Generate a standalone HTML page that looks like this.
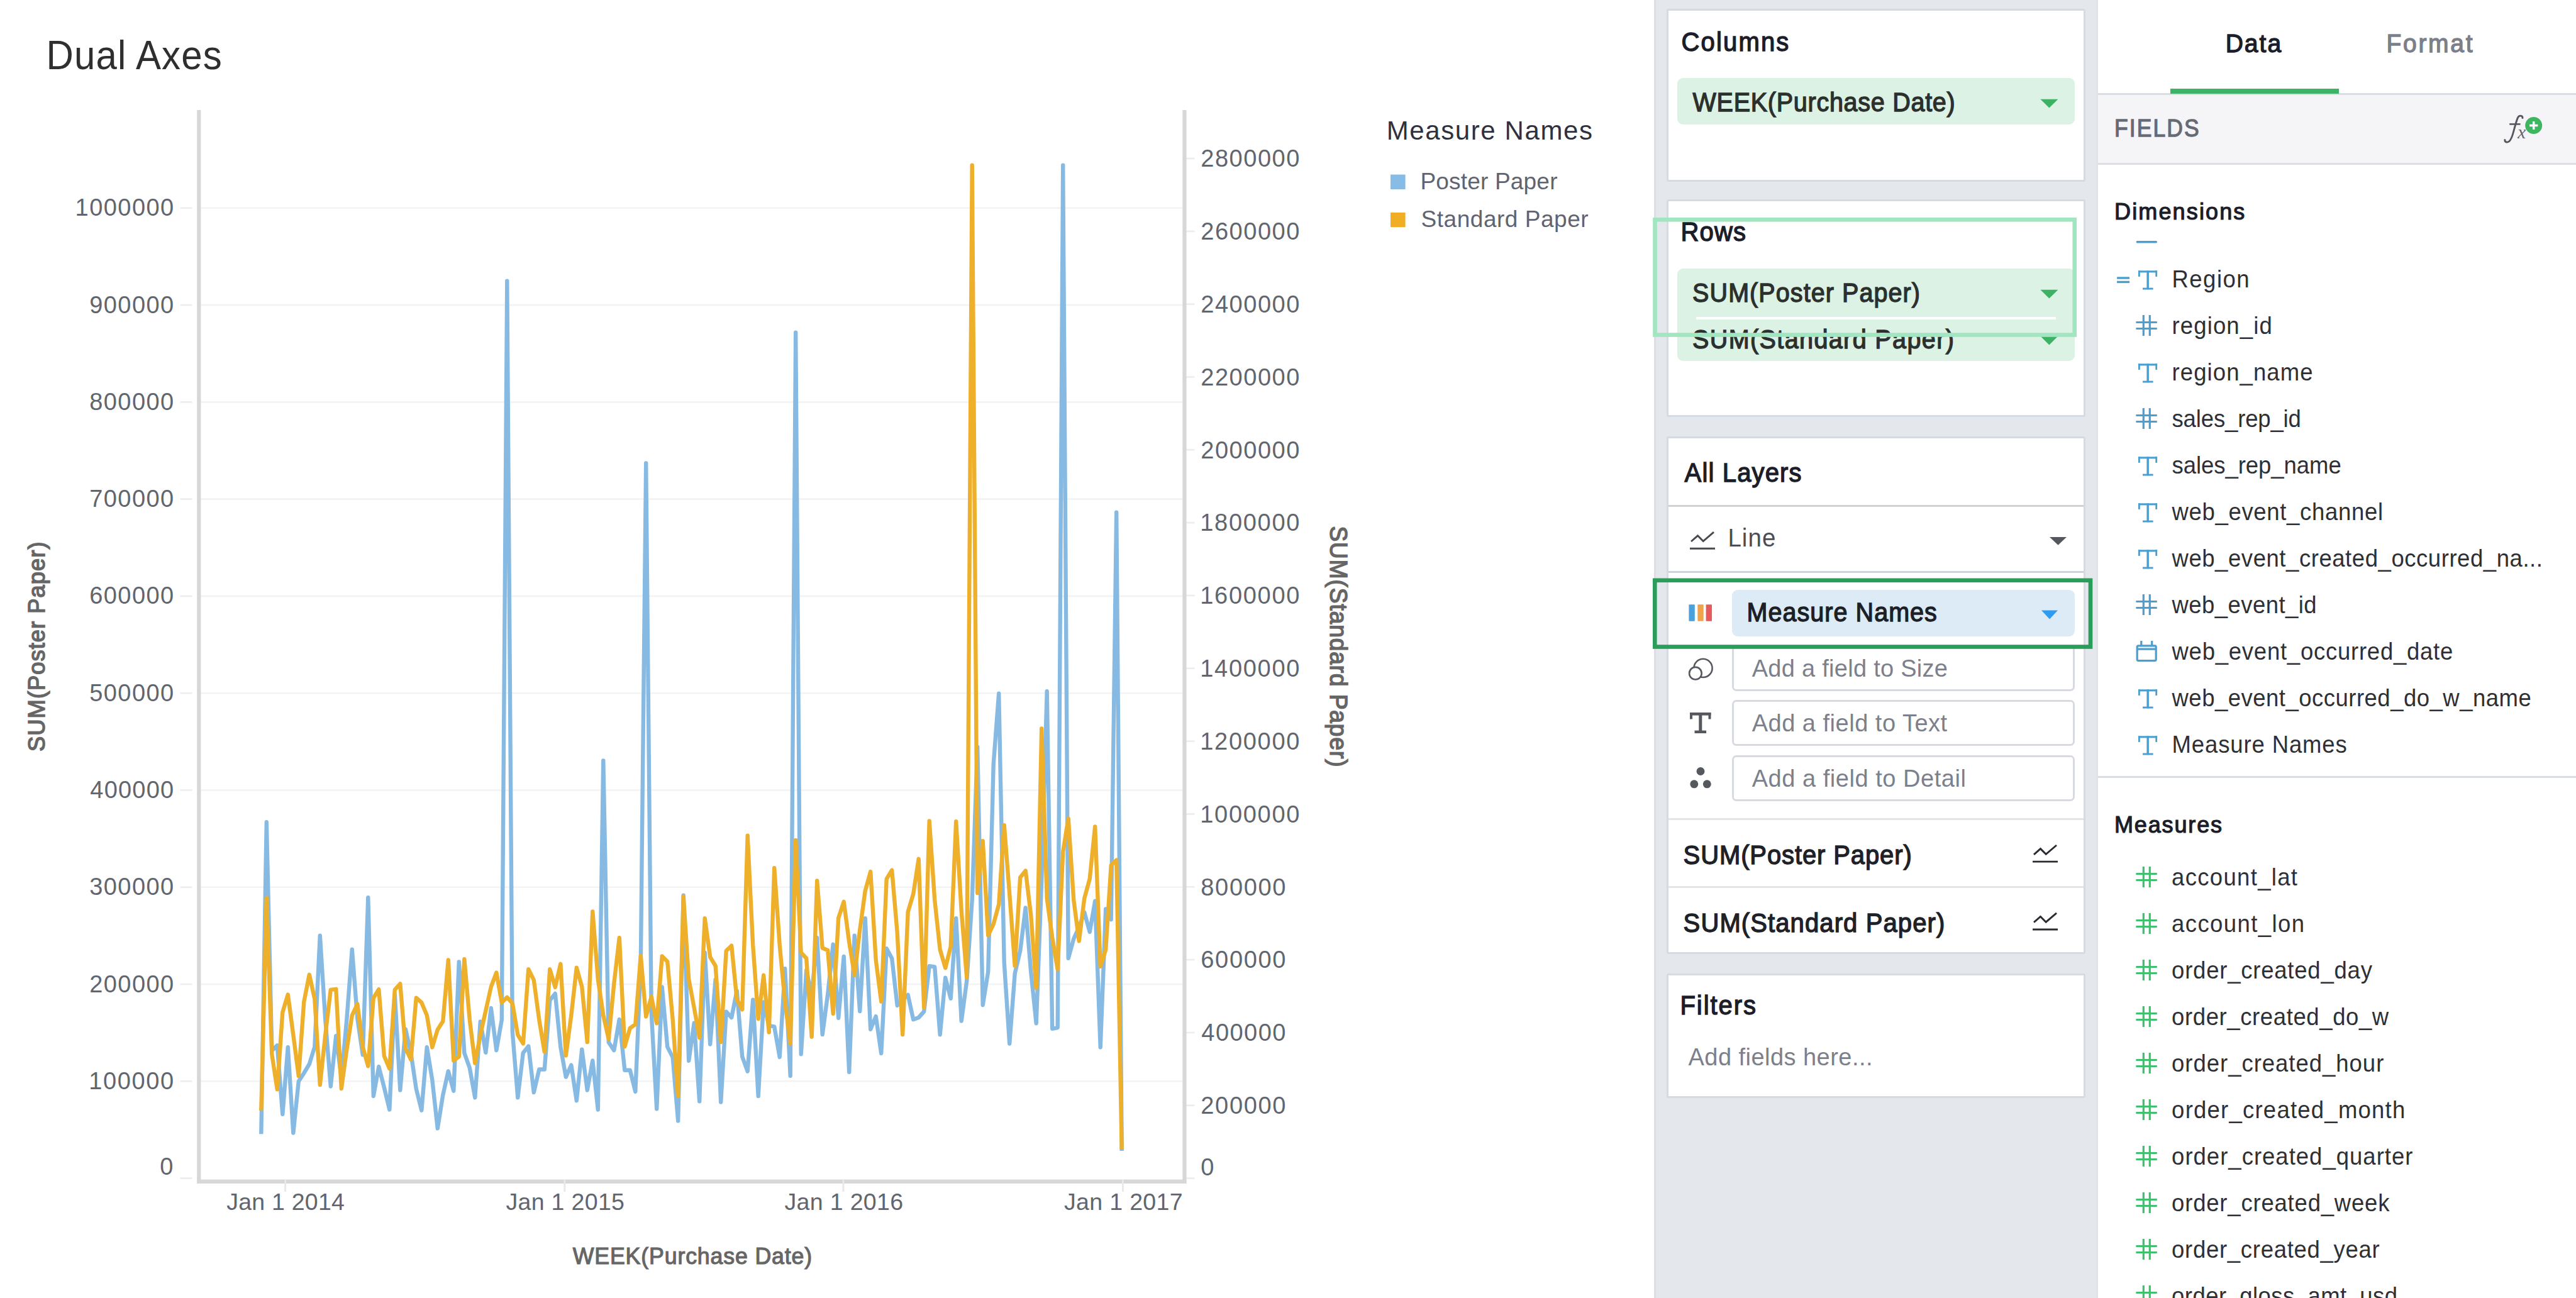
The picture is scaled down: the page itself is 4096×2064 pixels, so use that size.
<!DOCTYPE html><html><head><meta charset="utf-8"><title>Dual Axes</title>
<style>html,body{margin:0;padding:0;}body{width:4096px;height:2064px;position:relative;overflow:hidden;background:#fff;font-family:"Liberation Sans", sans-serif;}svg{position:absolute;left:0;top:0;}</style></head><body>
<svg width="4096" height="2064" viewBox="0 0 4096 2064">
<line x1="319" x2="1880" y1="1719.32" y2="1719.32" stroke="#f3f3f3" stroke-width="2.6"/>
<line x1="319" x2="1880" y1="1565.04" y2="1565.04" stroke="#f3f3f3" stroke-width="2.6"/>
<line x1="319" x2="1880" y1="1410.76" y2="1410.76" stroke="#f3f3f3" stroke-width="2.6"/>
<line x1="319" x2="1880" y1="1256.48" y2="1256.48" stroke="#f3f3f3" stroke-width="2.6"/>
<line x1="319" x2="1880" y1="1102.20" y2="1102.20" stroke="#f3f3f3" stroke-width="2.6"/>
<line x1="319" x2="1880" y1="947.92" y2="947.92" stroke="#f3f3f3" stroke-width="2.6"/>
<line x1="319" x2="1880" y1="793.64" y2="793.64" stroke="#f3f3f3" stroke-width="2.6"/>
<line x1="319" x2="1880" y1="639.36" y2="639.36" stroke="#f3f3f3" stroke-width="2.6"/>
<line x1="319" x2="1880" y1="485.08" y2="485.08" stroke="#f3f3f3" stroke-width="2.6"/>
<line x1="319" x2="1880" y1="330.80" y2="330.80" stroke="#f3f3f3" stroke-width="2.6"/>
<line x1="286.5" x2="305.5" y1="1873.60" y2="1873.60" stroke="#ededed" stroke-width="2.6"/>
<line x1="286.5" x2="305.5" y1="1719.32" y2="1719.32" stroke="#ededed" stroke-width="2.6"/>
<line x1="286.5" x2="305.5" y1="1565.04" y2="1565.04" stroke="#ededed" stroke-width="2.6"/>
<line x1="286.5" x2="305.5" y1="1410.76" y2="1410.76" stroke="#ededed" stroke-width="2.6"/>
<line x1="286.5" x2="305.5" y1="1256.48" y2="1256.48" stroke="#ededed" stroke-width="2.6"/>
<line x1="286.5" x2="305.5" y1="1102.20" y2="1102.20" stroke="#ededed" stroke-width="2.6"/>
<line x1="286.5" x2="305.5" y1="947.92" y2="947.92" stroke="#ededed" stroke-width="2.6"/>
<line x1="286.5" x2="305.5" y1="793.64" y2="793.64" stroke="#ededed" stroke-width="2.6"/>
<line x1="286.5" x2="305.5" y1="639.36" y2="639.36" stroke="#ededed" stroke-width="2.6"/>
<line x1="286.5" x2="305.5" y1="485.08" y2="485.08" stroke="#ededed" stroke-width="2.6"/>
<line x1="286.5" x2="305.5" y1="330.80" y2="330.80" stroke="#ededed" stroke-width="2.6"/>
<line x1="1886" x2="1899.5" y1="1873.60" y2="1873.60" stroke="#ededed" stroke-width="2.6"/>
<line x1="1886" x2="1899.5" y1="1757.77" y2="1757.77" stroke="#ededed" stroke-width="2.6"/>
<line x1="1886" x2="1899.5" y1="1641.94" y2="1641.94" stroke="#ededed" stroke-width="2.6"/>
<line x1="1886" x2="1899.5" y1="1526.11" y2="1526.11" stroke="#ededed" stroke-width="2.6"/>
<line x1="1886" x2="1899.5" y1="1410.28" y2="1410.28" stroke="#ededed" stroke-width="2.6"/>
<line x1="1886" x2="1899.5" y1="1294.45" y2="1294.45" stroke="#ededed" stroke-width="2.6"/>
<line x1="1886" x2="1899.5" y1="1178.62" y2="1178.62" stroke="#ededed" stroke-width="2.6"/>
<line x1="1886" x2="1899.5" y1="1062.79" y2="1062.79" stroke="#ededed" stroke-width="2.6"/>
<line x1="1886" x2="1899.5" y1="946.96" y2="946.96" stroke="#ededed" stroke-width="2.6"/>
<line x1="1886" x2="1899.5" y1="831.13" y2="831.13" stroke="#ededed" stroke-width="2.6"/>
<line x1="1886" x2="1899.5" y1="715.30" y2="715.30" stroke="#ededed" stroke-width="2.6"/>
<line x1="1886" x2="1899.5" y1="599.47" y2="599.47" stroke="#ededed" stroke-width="2.6"/>
<line x1="1886" x2="1899.5" y1="483.64" y2="483.64" stroke="#ededed" stroke-width="2.6"/>
<line x1="1886" x2="1899.5" y1="367.81" y2="367.81" stroke="#ededed" stroke-width="2.6"/>
<line x1="1886" x2="1899.5" y1="251.98" y2="251.98" stroke="#ededed" stroke-width="2.6"/>
<line x1="453.7" x2="453.7" y1="1882" y2="1895" stroke="#ededed" stroke-width="2.8"/>
<line x1="897.8" x2="897.8" y1="1882" y2="1895" stroke="#ededed" stroke-width="2.8"/>
<line x1="1340.9" x2="1340.9" y1="1882" y2="1895" stroke="#ededed" stroke-width="2.8"/>
<line x1="1785.4" x2="1785.4" y1="1882" y2="1895" stroke="#ededed" stroke-width="2.8"/>
<polyline points="415.3,1803.2 423.8,1307.3 432.3,1670.6 440.8,1662.3 449.3,1771.7 457.8,1665.1 466.3,1801.6 474.8,1719.6 483.3,1706.4 491.8,1692.1 500.3,1664.6 508.8,1487.6 517.3,1621.6 525.8,1727.5 534.3,1647.1 542.8,1714.4 551.3,1621.6 559.8,1509.8 568.3,1619.3 576.8,1677.4 585.3,1427.2 593.8,1743.0 602.3,1696.1 610.8,1729.1 619.3,1764.5 627.8,1581.5 636.3,1733.5 644.8,1636.4 653.3,1674.2 661.8,1731.5 670.3,1765.7 678.8,1665.1 687.3,1717.2 695.8,1794.4 704.3,1741.1 712.8,1703.3 721.3,1734.7 729.8,1529.4 738.3,1674.2 746.8,1698.1 755.3,1745.4 763.8,1624.4 772.3,1673.8 780.8,1603.0 789.3,1670.2 797.8,1621.6 806.3,446.7 814.8,1640.8 823.3,1745.4 831.8,1674.2 840.3,1663.6 848.8,1737.1 857.3,1700.5 865.8,1700.5 874.3,1590.6 882.8,1580.0 891.3,1664.6 899.8,1712.6 908.3,1693.6 916.8,1750.2 925.3,1668.6 933.8,1733.5 942.3,1686.5 950.8,1764.5 959.3,1209.4 967.8,1657.5 976.3,1670.2 984.8,1620.9 993.3,1701.7 1001.8,1701.7 1010.3,1735.9 1018.8,1533.0 1027.2,736.5 1035.7,1609.7 1044.2,1763.3 1052.7,1569.5 1061.2,1664.6 1069.7,1681.4 1078.2,1782.4 1086.7,1423.8 1095.2,1686.9 1103.7,1626.8 1112.2,1751.4 1120.7,1514.8 1129.2,1660.6 1137.7,1557.6 1146.2,1752.6 1154.7,1608.6 1163.2,1618.0 1171.7,1575.5 1180.2,1680.2 1188.7,1703.6 1197.2,1589.8 1205.7,1743.0 1214.2,1593.4 1222.7,1631.2 1231.2,1632.4 1239.7,1680.9 1248.2,1540.2 1256.7,1710.8 1265.2,528.8 1273.7,1676.2 1282.2,1542.8 1290.7,1583.0 1299.2,1491.2 1307.7,1645.1 1316.2,1581.0 1324.7,1501.8 1333.2,1618.8 1341.7,1521.0 1350.2,1704.8 1358.7,1487.6 1367.2,1608.1 1375.7,1460.1 1384.2,1636.8 1392.7,1616.1 1401.2,1675.0 1409.7,1508.3 1418.2,1524.0 1426.7,1598.9 1435.2,1590.0 1443.7,1582.0 1452.2,1621.2 1460.7,1618.0 1469.2,1608.5 1477.7,1536.2 1486.2,1537.4 1494.7,1645.2 1503.2,1554.8 1511.7,1587.8 1520.2,1460.1 1528.7,1623.6 1537.2,1560.0 1545.7,1431.0 1554.2,1187.8 1562.7,1598.2 1571.2,1545.0 1579.7,1215.0 1588.2,1102.8 1596.7,1530.0 1605.2,1659.5 1613.7,1548.0 1622.2,1512.0 1630.7,1443.4 1639.2,1545.0 1647.7,1627.2 1656.2,1400.0 1664.7,1099.3 1673.2,1635.8 1681.7,1634.0 1690.2,262.6 1698.7,1523.8 1707.2,1493.0 1715.7,1474.0 1724.2,1450.6 1732.7,1482.0 1741.2,1432.7 1749.7,1665.4 1758.2,1445.4 1766.7,1462.1 1775.2,814.8 1783.7,1830.0" fill="none" stroke="#86bae3" stroke-width="6.4" stroke-linejoin="round"/>
<polyline points="415.3,1766.1 423.8,1427.8 432.3,1676.6 440.8,1732.3 449.3,1609.7 457.8,1581.5 466.3,1645.5 474.8,1710.8 483.3,1593.0 491.8,1549.8 500.3,1588.2 508.8,1725.1 517.3,1645.5 525.8,1573.9 534.3,1572.8 542.8,1731.1 551.3,1669.4 559.8,1614.5 568.3,1596.5 576.8,1664.6 585.3,1695.3 593.8,1587.0 602.3,1573.2 610.8,1679.0 619.3,1699.2 627.8,1573.9 636.3,1564.3 644.8,1667.0 653.3,1685.0 661.8,1586.7 670.3,1594.2 678.8,1614.5 687.3,1665.4 695.8,1637.2 704.3,1624.0 712.8,1526.5 721.3,1686.5 729.8,1680.2 738.3,1525.1 746.8,1621.6 755.3,1690.5 763.8,1645.5 772.3,1607.3 780.8,1569.1 789.3,1546.6 797.8,1594.2 806.3,1585.8 814.8,1595.4 823.3,1645.5 831.8,1659.4 840.3,1541.2 848.8,1558.4 857.3,1621.6 865.8,1672.6 874.3,1541.3 882.8,1569.9 891.3,1532.8 899.8,1678.6 908.3,1614.5 916.8,1538.8 925.3,1569.1 933.8,1657.1 942.3,1449.4 950.8,1557.2 959.3,1614.5 967.8,1652.3 976.3,1564.3 984.8,1491.2 993.3,1664.2 1001.8,1634.8 1010.3,1628.8 1018.8,1519.8 1027.2,1616.5 1035.7,1585.0 1044.2,1627.2 1052.7,1520.5 1061.2,1529.0 1069.7,1621.6 1078.2,1743.0 1086.7,1425.5 1095.2,1557.2 1103.7,1602.5 1112.2,1649.9 1120.7,1460.1 1129.2,1521.8 1137.7,1536.0 1146.2,1657.1 1154.7,1512.0 1163.2,1503.7 1171.7,1589.4 1180.2,1605.3 1188.7,1328.8 1197.2,1503.0 1205.7,1620.0 1214.2,1550.8 1222.7,1641.5 1231.2,1380.1 1239.7,1502.7 1248.2,1593.0 1256.7,1659.5 1265.2,1335.9 1273.7,1514.7 1282.2,1524.0 1290.7,1648.7 1299.2,1400.4 1307.7,1507.5 1316.2,1511.0 1324.7,1611.7 1333.2,1459.7 1341.7,1433.8 1350.2,1498.0 1358.7,1550.8 1367.2,1478.8 1375.7,1416.7 1384.2,1386.1 1392.7,1526.6 1401.2,1592.6 1409.7,1397.6 1418.2,1383.7 1426.7,1483.0 1435.2,1645.2 1443.7,1450.0 1452.2,1421.5 1460.7,1365.8 1469.2,1602.2 1477.7,1305.4 1486.2,1431.0 1494.7,1510.0 1503.2,1539.2 1511.7,1505.0 1520.2,1306.1 1528.7,1448.0 1537.2,1554.2 1545.7,262.6 1554.2,1419.9 1562.7,1337.1 1571.2,1487.3 1579.7,1469.3 1588.2,1438.2 1596.7,1312.1 1605.2,1421.5 1613.7,1535.7 1622.2,1395.2 1630.7,1384.6 1639.2,1455.0 1647.7,1571.2 1656.2,1158.5 1664.7,1428.7 1673.2,1490.8 1681.7,1541.7 1690.2,1354.6 1698.7,1301.3 1707.2,1431.0 1715.7,1496.3 1724.2,1428.7 1732.7,1397.6 1741.2,1314.4 1749.7,1536.9 1758.2,1510.0 1766.7,1376.0 1775.2,1367.7 1783.7,1828.0" fill="none" stroke="#eeb02b" stroke-width="6.4" stroke-linejoin="round"/>
<rect x="313.2" y="175" width="6.2" height="1707" fill="#d7d7d7"/>
<rect x="1880.3" y="175" width="6.2" height="1707" fill="#d7d7d7"/>
<rect x="313.2" y="1875.6" width="1573.3" height="6.4" fill="#d7d7d7"/>
<line x1="453.7" x2="453.7" y1="1875.6" y2="1895" stroke="#e9e9e9" stroke-width="2.8"/>
<line x1="897.8" x2="897.8" y1="1875.6" y2="1895" stroke="#e9e9e9" stroke-width="2.8"/>
<line x1="1340.9" x2="1340.9" y1="1875.6" y2="1895" stroke="#e9e9e9" stroke-width="2.8"/>
<line x1="1785.4" x2="1785.4" y1="1875.6" y2="1895" stroke="#e9e9e9" stroke-width="2.8"/>
<rect x="2211" y="277.6" width="23.6" height="23.4" fill="#86bce5"/>
<rect x="2211" y="338" width="23.6" height="23.2" fill="#efae24"/>
<text transform="translate(71,1028.2) rotate(-90) scale(1,1.03)" text-anchor="middle" font-family='"Liberation Sans", sans-serif' font-size="36.3" fill="#666" stroke="#666" stroke-width="1.5" textLength="333.5" lengthAdjust="spacing">SUM(Poster Paper)</text>
<text transform="translate(2115,1028) rotate(90) scale(1,1.03)" text-anchor="middle" font-family='"Liberation Sans", sans-serif' font-size="37" fill="#666" stroke="#666" stroke-width="1.5" textLength="383" lengthAdjust="spacing">SUM(Standard Paper)</text>
</svg>
<div style="position:absolute;left:73.60px;top:60.01px;font-size:60px;line-height:60px;color:#2f2f2f;white-space:nowrap;letter-spacing:1.125px;transform:scaleY(1.068);transform-origin:0 50.79px;">Dual Axes</div>
<div style="position:absolute;left:254.30px;top:1836.13px;font-size:38px;line-height:38px;color:#61656e;white-space:nowrap;">0</div>
<div style="position:absolute;left:141.30px;top:1699.85px;font-size:38px;line-height:38px;color:#61656e;white-space:nowrap;letter-spacing:1.600px;">100000</div>
<div style="position:absolute;left:142.30px;top:1545.57px;font-size:38px;line-height:38px;color:#61656e;white-space:nowrap;letter-spacing:1.400px;">200000</div>
<div style="position:absolute;left:142.30px;top:1391.29px;font-size:38px;line-height:38px;color:#61656e;white-space:nowrap;letter-spacing:1.400px;">300000</div>
<div style="position:absolute;left:143.30px;top:1237.01px;font-size:38px;line-height:38px;color:#61656e;white-space:nowrap;letter-spacing:1.200px;">400000</div>
<div style="position:absolute;left:142.30px;top:1082.73px;font-size:38px;line-height:38px;color:#61656e;white-space:nowrap;letter-spacing:1.400px;">500000</div>
<div style="position:absolute;left:142.30px;top:928.45px;font-size:38px;line-height:38px;color:#61656e;white-space:nowrap;letter-spacing:1.400px;">600000</div>
<div style="position:absolute;left:142.30px;top:774.17px;font-size:38px;line-height:38px;color:#61656e;white-space:nowrap;letter-spacing:1.400px;">700000</div>
<div style="position:absolute;left:142.30px;top:619.89px;font-size:38px;line-height:38px;color:#61656e;white-space:nowrap;letter-spacing:1.400px;">800000</div>
<div style="position:absolute;left:142.30px;top:465.61px;font-size:38px;line-height:38px;color:#61656e;white-space:nowrap;letter-spacing:1.400px;">900000</div>
<div style="position:absolute;left:119.60px;top:311.33px;font-size:38px;line-height:38px;color:#61656e;white-space:nowrap;letter-spacing:1.450px;">1000000</div>
<div style="position:absolute;left:1909.30px;top:1836.83px;font-size:38px;line-height:38px;color:#61656e;white-space:nowrap;">0</div>
<div style="position:absolute;left:1909.30px;top:1739.10px;font-size:38px;line-height:38px;color:#61656e;white-space:nowrap;letter-spacing:1.660px;">200000</div>
<div style="position:absolute;left:1910.30px;top:1623.27px;font-size:38px;line-height:38px;color:#61656e;white-space:nowrap;letter-spacing:1.460px;">400000</div>
<div style="position:absolute;left:1909.30px;top:1507.44px;font-size:38px;line-height:38px;color:#61656e;white-space:nowrap;letter-spacing:1.660px;">600000</div>
<div style="position:absolute;left:1909.30px;top:1391.61px;font-size:38px;line-height:38px;color:#61656e;white-space:nowrap;letter-spacing:1.660px;">800000</div>
<div style="position:absolute;left:1908.30px;top:1275.78px;font-size:38px;line-height:38px;color:#61656e;white-space:nowrap;letter-spacing:1.683px;">1000000</div>
<div style="position:absolute;left:1908.30px;top:1159.95px;font-size:38px;line-height:38px;color:#61656e;white-space:nowrap;letter-spacing:1.683px;">1200000</div>
<div style="position:absolute;left:1908.30px;top:1044.12px;font-size:38px;line-height:38px;color:#61656e;white-space:nowrap;letter-spacing:1.683px;">1400000</div>
<div style="position:absolute;left:1908.30px;top:928.29px;font-size:38px;line-height:38px;color:#61656e;white-space:nowrap;letter-spacing:1.683px;">1600000</div>
<div style="position:absolute;left:1908.30px;top:812.46px;font-size:38px;line-height:38px;color:#61656e;white-space:nowrap;letter-spacing:1.683px;">1800000</div>
<div style="position:absolute;left:1909.30px;top:696.63px;font-size:38px;line-height:38px;color:#61656e;white-space:nowrap;letter-spacing:1.517px;">2000000</div>
<div style="position:absolute;left:1909.30px;top:580.80px;font-size:38px;line-height:38px;color:#61656e;white-space:nowrap;letter-spacing:1.517px;">2200000</div>
<div style="position:absolute;left:1909.30px;top:464.97px;font-size:38px;line-height:38px;color:#61656e;white-space:nowrap;letter-spacing:1.517px;">2400000</div>
<div style="position:absolute;left:1909.30px;top:349.14px;font-size:38px;line-height:38px;color:#61656e;white-space:nowrap;letter-spacing:1.517px;">2600000</div>
<div style="position:absolute;left:1909.30px;top:233.31px;font-size:38px;line-height:38px;color:#61656e;white-space:nowrap;letter-spacing:1.517px;">2800000</div>
<div style="position:absolute;left:360.30px;top:1892.56px;font-size:37.5px;line-height:37.5px;color:#61656e;white-space:nowrap;letter-spacing:0.222px;">Jan 1 2014</div>
<div style="position:absolute;left:804.40px;top:1892.56px;font-size:37.5px;line-height:37.5px;color:#61656e;white-space:nowrap;letter-spacing:0.333px;">Jan 1 2015</div>
<div style="position:absolute;left:1247.50px;top:1892.56px;font-size:37.5px;line-height:37.5px;color:#61656e;white-space:nowrap;letter-spacing:0.333px;">Jan 1 2016</div>
<div style="position:absolute;left:1692.00px;top:1892.56px;font-size:37.5px;line-height:37.5px;color:#61656e;white-space:nowrap;letter-spacing:0.333px;">Jan 1 2017</div>
<div style="position:absolute;left:910.75px;top:1981.18px;font-size:35.7px;line-height:35.7px;color:#666;white-space:nowrap;-webkit-text-stroke:1.18px #666;letter-spacing:0.861px;transform:scaleY(1.05);transform-origin:0 30.22px;">WEEK(Purchase Date)</div>
<div style="position:absolute;left:2204.80px;top:186.75px;font-size:42px;line-height:42px;color:#2f3140;white-space:nowrap;letter-spacing:1.583px;transform:scaleY(1.02);transform-origin:0 35.55px;">Measure Names</div>
<div style="position:absolute;left:2258.50px;top:270.18px;font-size:37px;line-height:37px;color:#5f6470;white-space:nowrap;letter-spacing:0.182px;">Poster Paper</div>
<div style="position:absolute;left:2259.50px;top:330.48px;font-size:37px;line-height:37px;color:#5f6470;white-space:nowrap;letter-spacing:0.538px;">Standard Paper</div>
<div style="position:absolute;left:2630.00px;top:0.00px;width:705.50px;height:2064.00px;box-sizing:border-box;background:#e4e7ec;"></div>
<div style="position:absolute;left:2630.00px;top:0.00px;width:2.60px;height:2064.00px;box-sizing:border-box;background:#dcdee3;"></div>
<div style="position:absolute;left:3332.50px;top:0.00px;width:3.00px;height:2064.00px;box-sizing:border-box;background:#dfe2e7;"></div>
<div style="position:absolute;left:2650.00px;top:14.00px;width:666.00px;height:274.50px;box-sizing:border-box;background:#fff;border:3px solid #d6dae1;border-radius:3px;"></div>
<div style="position:absolute;left:2673.50px;top:46.84px;font-size:40px;line-height:40px;color:#1b1d29;white-space:nowrap;-webkit-text-stroke:1.32px #1b1d29;letter-spacing:2.167px;transform:scaleY(1.065);transform-origin:0 33.86px;">Columns</div>
<div style="position:absolute;left:2667.00px;top:124.00px;width:632.40px;height:74.00px;box-sizing:border-box;background:#dbf2e4;border-radius:9px;"></div>
<div style="position:absolute;left:2691.60px;top:143.96px;font-size:39.5px;line-height:39.5px;color:#2c302d;white-space:nowrap;-webkit-text-stroke:1.30px #2c302d;letter-spacing:0.733px;transform:scaleY(1.065);transform-origin:0 33.44px;">WEEK(Purchase Date)</div>
<div style="position:absolute;left:2650.00px;top:316.80px;width:666.00px;height:346.20px;box-sizing:border-box;background:#fff;border:3px solid #d6dae1;border-radius:3px;"></div>
<div style="position:absolute;left:2672.60px;top:348.94px;font-size:40px;line-height:40px;color:#1b1d29;white-space:nowrap;-webkit-text-stroke:1.32px #1b1d29;letter-spacing:1.133px;transform:scaleY(1.065);transform-origin:0 33.86px;">Rows</div>
<div style="position:absolute;left:2667.00px;top:427.30px;width:632.40px;height:146.70px;box-sizing:border-box;background:#dbf2e4;border-radius:9px;"></div>
<div style="position:absolute;left:2696.50px;top:504.30px;width:572.50px;height:3.30px;box-sizing:border-box;background:#fff;"></div>
<div style="position:absolute;left:2691.10px;top:446.86px;font-size:39.5px;line-height:39.5px;color:#2c302d;white-space:nowrap;-webkit-text-stroke:1.30px #2c302d;letter-spacing:1.081px;transform:scaleY(1.065);transform-origin:0 33.44px;">SUM(Poster Paper)</div>
<div style="position:absolute;left:2691.10px;top:520.76px;font-size:39.5px;line-height:39.5px;color:#2c302d;white-space:nowrap;-webkit-text-stroke:1.30px #2c302d;letter-spacing:1.389px;transform:scaleY(1.065);transform-origin:0 33.44px;">SUM(Standard Paper)</div>
<div style="position:absolute;left:2650.00px;top:693.50px;width:666.00px;height:823.10px;box-sizing:border-box;background:#fff;border:3px solid #d6dae1;border-radius:3px;"></div>
<div style="position:absolute;left:2678.60px;top:732.34px;font-size:40px;line-height:40px;color:#1b1d29;white-space:nowrap;-webkit-text-stroke:1.32px #1b1d29;letter-spacing:1.144px;transform:scaleY(1.065);transform-origin:0 33.86px;">All Layers</div>
<div style="position:absolute;left:2653.00px;top:802.80px;width:660.00px;height:3.40px;box-sizing:border-box;background:#cfd2d7;"></div>
<div style="position:absolute;left:2747.40px;top:837.41px;font-size:38.5px;line-height:38.5px;color:#4b4d54;white-space:nowrap;letter-spacing:1.067px;transform:scaleY(1.04);transform-origin:0 32.59px;">Line</div>
<div style="position:absolute;left:2653.00px;top:907.80px;width:660.00px;height:3.40px;box-sizing:border-box;background:#cfd2d7;"></div>
<div style="position:absolute;left:2754.30px;top:938.00px;width:545.10px;height:73.50px;box-sizing:border-box;background:#dcebf6;border-radius:9px;"></div>
<div style="position:absolute;left:2777.60px;top:954.96px;font-size:39.5px;line-height:39.5px;color:#1d1f27;white-space:nowrap;-webkit-text-stroke:1.30px #1d1f27;letter-spacing:1.042px;transform:scaleY(1.065);transform-origin:0 33.44px;">Measure Names</div>
<div style="position:absolute;left:2754.30px;top:1025.50px;width:545.10px;height:73.00px;box-sizing:border-box;background:#fff;border:3px solid #d7dae0;border-radius:7px;"></div>
<div style="position:absolute;left:2785.70px;top:1043.73px;font-size:38px;line-height:38px;color:#7c808c;white-space:nowrap;letter-spacing:0.278px;transform:scaleY(1.03);transform-origin:0 32.17px;">Add a field to Size</div>
<div style="position:absolute;left:2754.30px;top:1113.10px;width:545.10px;height:73.00px;box-sizing:border-box;background:#fff;border:3px solid #d7dae0;border-radius:7px;"></div>
<div style="position:absolute;left:2785.70px;top:1131.33px;font-size:38px;line-height:38px;color:#7c808c;white-space:nowrap;letter-spacing:0.500px;transform:scaleY(1.03);transform-origin:0 32.17px;">Add a field to Text</div>
<div style="position:absolute;left:2754.30px;top:1200.70px;width:545.10px;height:73.00px;box-sizing:border-box;background:#fff;border:3px solid #d7dae0;border-radius:7px;"></div>
<div style="position:absolute;left:2785.70px;top:1218.93px;font-size:38px;line-height:38px;color:#7c808c;white-space:nowrap;letter-spacing:0.530px;transform:scaleY(1.03);transform-origin:0 32.17px;">Add a field to Detail</div>
<div style="position:absolute;left:2653.00px;top:1300.50px;width:660.00px;height:3.00px;box-sizing:border-box;background:#e3e5ea;"></div>
<div style="position:absolute;left:2676.60px;top:1340.14px;font-size:40px;line-height:40px;color:#202127;white-space:nowrap;-webkit-text-stroke:1.32px #202127;letter-spacing:0.887px;transform:scaleY(1.065);transform-origin:0 33.86px;">SUM(Poster Paper)</div>
<div style="position:absolute;left:2653.00px;top:1408.50px;width:660.00px;height:3.00px;box-sizing:border-box;background:#e3e5ea;"></div>
<div style="position:absolute;left:2676.60px;top:1448.04px;font-size:40px;line-height:40px;color:#202127;white-space:nowrap;-webkit-text-stroke:1.32px #202127;letter-spacing:1.111px;transform:scaleY(1.065);transform-origin:0 33.86px;">SUM(Standard Paper)</div>
<div style="position:absolute;left:2650.00px;top:1547.70px;width:666.00px;height:198.80px;box-sizing:border-box;background:#fff;border:3px solid #d6dae1;border-radius:3px;"></div>
<div style="position:absolute;left:2671.50px;top:1579.14px;font-size:40px;line-height:40px;color:#1b1d29;white-space:nowrap;-webkit-text-stroke:1.32px #1b1d29;letter-spacing:1.917px;transform:scaleY(1.065);transform-origin:0 33.86px;">Filters</div>
<div style="position:absolute;left:2684.50px;top:1662.13px;font-size:38px;line-height:38px;color:#7c808c;white-space:nowrap;letter-spacing:0.459px;transform:scaleY(1.03);transform-origin:0 32.17px;">Add fields here...</div>
<svg width="4096" height="2064" viewBox="0 0 4096 2064">
<path d="M3244.4,157.8 h28 l-14,13.8z" fill="#3db164"/>
<path d="M3244.4,460.8 h28 l-14,13.8z" fill="#3db164"/>
<path d="M3244.4,534.6 h28 l-14,13.8z" fill="#3db164"/>
<path d="M3259,854 h27 l-13.5,12.8z" fill="#55575f"/>
<path d="M3246,970.6 h26 l-13,14z" fill="#2e9cf0"/>
<rect x="2685.4" y="961.2" width="9.4" height="26.6" rx="1" fill="#4aa2dc"/>
<rect x="2699.3" y="961.2" width="9.4" height="26.6" rx="1" fill="#f0a34a"/>
<rect x="2712.6" y="961.2" width="9.4" height="26.6" rx="1" fill="#e8595b"/>
<g fill="none" stroke="#47494f" stroke-width="2.9"><path d="M2687,872.3 h40"/><path d="M2689,861 l10.5,-9.2 l8.7,8.7 l16.8,-14.3"/></g>
<g fill="none" stroke="#2a2b30" stroke-width="2.9"><path d="M3232,1370.1 h40"/><path d="M3234,1358.8 l10.5,-9.2 l8.7,8.7 l16.8,-14.3"/></g>
<g fill="none" stroke="#2a2b30" stroke-width="2.9"><path d="M3232,1478.0 h40"/><path d="M3234,1466.7 l10.5,-9.2 l8.7,8.7 l16.8,-14.3"/></g>
<circle cx="2708" cy="1062.4" r="14.6" fill="none" stroke="#55585f" stroke-width="2.6"/>
<circle cx="2695.9" cy="1070.7" r="9.8" fill="#fff" stroke="#55585f" stroke-width="2.6"/>
<g fill="#55585f"><rect x="2687" y="1133" width="33.5" height="4.6"/><rect x="2687" y="1133" width="4" height="10.5"/><rect x="2716.5" y="1133" width="4" height="10.5"/><rect x="2701.3" y="1133" width="5" height="33"/><rect x="2694.5" y="1161.6" width="18.6" height="4.4"/></g>
<g fill="#55585f"><circle cx="2704" cy="1226.5" r="6.5"/><circle cx="2693.8" cy="1246.8" r="6.5"/><circle cx="2714.3" cy="1246.8" r="6.5"/></g>
<rect x="2631.5" y="349.3" width="667.2" height="183.2" fill="none" stroke="#a2e5c1" stroke-width="6.6"/>
<rect x="2631.3" y="922.8" width="692.7" height="105.7" fill="none" stroke="#2a9d5b" stroke-width="6.6"/>
</svg>
<div style="position:absolute;left:3538.70px;top:50.39px;font-size:39px;line-height:39px;color:#1b1d29;white-space:nowrap;-webkit-text-stroke:1.29px #1b1d29;letter-spacing:2.000px;transform:scaleY(1.05);transform-origin:0 33.01px;">Data</div>
<div style="position:absolute;left:3794.50px;top:50.39px;font-size:39px;line-height:39px;color:#7b7f8b;white-space:nowrap;-webkit-text-stroke:1.29px #7b7f8b;letter-spacing:2.700px;transform:scaleY(1.05);transform-origin:0 33.01px;">Format</div>
<div style="position:absolute;left:3335.50px;top:148.30px;width:760.50px;height:3.10px;box-sizing:border-box;background:#d9dce1;"></div>
<div style="position:absolute;left:3450.50px;top:140.60px;width:268.80px;height:8.00px;box-sizing:border-box;background:#3eb266;"></div>
<div style="position:absolute;left:3335.50px;top:151.40px;width:760.50px;height:107.60px;box-sizing:border-box;background:#f5f5f8;"></div>
<div style="position:absolute;left:3335.50px;top:259.00px;width:760.50px;height:3.00px;box-sizing:border-box;background:#dcdfe4;"></div>
<div style="position:absolute;left:3362.00px;top:187.85px;font-size:35.5px;line-height:35.5px;color:#666a75;white-space:nowrap;-webkit-text-stroke:1.17px #666a75;letter-spacing:2.060px;transform:scaleY(1.07);transform-origin:0 30.05px;">FIELDS</div>
<div style="position:absolute;left:3362.00px;top:318.73px;font-size:36px;line-height:36px;color:#1b1d29;white-space:nowrap;-webkit-text-stroke:1.19px #1b1d29;letter-spacing:2.144px;transform:scaleY(1.05);transform-origin:0 30.47px;">Dimensions</div>
<div style="position:absolute;left:3335.50px;top:1233.50px;width:760.50px;height:3.00px;box-sizing:border-box;background:#d9dce3;"></div>
<div style="position:absolute;left:3362.00px;top:1293.53px;font-size:36px;line-height:36px;color:#1b1d29;white-space:nowrap;-webkit-text-stroke:1.19px #1b1d29;letter-spacing:1.857px;transform:scaleY(1.05);transform-origin:0 30.47px;">Measures</div>
<div style="position:absolute;left:3453.50px;top:427.30px;font-size:36.5px;line-height:36.5px;color:#2e3035;white-space:nowrap;letter-spacing:1.480px;transform:scaleY(1.04);transform-origin:0 30.90px;">Region</div>
<div style="position:absolute;left:3453.50px;top:501.30px;font-size:36.5px;line-height:36.5px;color:#2e3035;white-space:nowrap;letter-spacing:1.137px;transform:scaleY(1.04);transform-origin:0 30.90px;">region_id</div>
<div style="position:absolute;left:3453.50px;top:575.30px;font-size:36.5px;line-height:36.5px;color:#2e3035;white-space:nowrap;letter-spacing:1.100px;transform:scaleY(1.04);transform-origin:0 30.90px;">region_name</div>
<div style="position:absolute;left:3453.50px;top:649.30px;font-size:36.5px;line-height:36.5px;color:#2e3035;white-space:nowrap;letter-spacing:-0.145px;transform:scaleY(1.04);transform-origin:0 30.90px;">sales_rep_id</div>
<div style="position:absolute;left:3453.50px;top:723.30px;font-size:36.5px;line-height:36.5px;color:#2e3035;white-space:nowrap;letter-spacing:-0.046px;transform:scaleY(1.04);transform-origin:0 30.90px;">sales_rep_name</div>
<div style="position:absolute;left:3453.50px;top:797.30px;font-size:36.5px;line-height:36.5px;color:#2e3035;white-space:nowrap;letter-spacing:0.675px;transform:scaleY(1.04);transform-origin:0 30.90px;">web_event_channel</div>
<div style="position:absolute;left:3453.50px;top:871.30px;font-size:36.5px;line-height:36.5px;color:#2e3035;white-space:nowrap;letter-spacing:0.555px;transform:scaleY(1.04);transform-origin:0 30.90px;">web_event_created_occurred_na...</div>
<div style="position:absolute;left:3453.50px;top:945.30px;font-size:36.5px;line-height:36.5px;color:#2e3035;white-space:nowrap;letter-spacing:0.436px;transform:scaleY(1.04);transform-origin:0 30.90px;">web_event_id</div>
<div style="position:absolute;left:3453.50px;top:1019.30px;font-size:36.5px;line-height:36.5px;color:#2e3035;white-space:nowrap;letter-spacing:0.755px;transform:scaleY(1.04);transform-origin:0 30.90px;">web_event_occurred_date</div>
<div style="position:absolute;left:3453.50px;top:1093.30px;font-size:36.5px;line-height:36.5px;color:#2e3035;white-space:nowrap;letter-spacing:0.489px;transform:scaleY(1.04);transform-origin:0 30.90px;">web_event_occurred_do_w_name</div>
<div style="position:absolute;left:3453.50px;top:1167.30px;font-size:36.5px;line-height:36.5px;color:#2e3035;white-space:nowrap;letter-spacing:0.875px;transform:scaleY(1.04);transform-origin:0 30.90px;">Measure Names</div>
<div style="position:absolute;left:3453.10px;top:1378.30px;font-size:36.5px;line-height:36.5px;color:#2e3035;white-space:nowrap;letter-spacing:1.320px;transform:scaleY(1.04);transform-origin:0 30.90px;">account_lat</div>
<div style="position:absolute;left:3453.10px;top:1452.30px;font-size:36.5px;line-height:36.5px;color:#2e3035;white-space:nowrap;letter-spacing:1.400px;transform:scaleY(1.04);transform-origin:0 30.90px;">account_lon</div>
<div style="position:absolute;left:3453.10px;top:1526.30px;font-size:36.5px;line-height:36.5px;color:#2e3035;white-space:nowrap;letter-spacing:0.775px;transform:scaleY(1.04);transform-origin:0 30.90px;">order_created_day</div>
<div style="position:absolute;left:3453.10px;top:1600.30px;font-size:36.5px;line-height:36.5px;color:#2e3035;white-space:nowrap;letter-spacing:0.606px;transform:scaleY(1.04);transform-origin:0 30.90px;">order_created_do_w</div>
<div style="position:absolute;left:3453.10px;top:1674.30px;font-size:36.5px;line-height:36.5px;color:#2e3035;white-space:nowrap;letter-spacing:0.976px;transform:scaleY(1.04);transform-origin:0 30.90px;">order_created_hour</div>
<div style="position:absolute;left:3453.10px;top:1748.30px;font-size:36.5px;line-height:36.5px;color:#2e3035;white-space:nowrap;letter-spacing:1.233px;transform:scaleY(1.04);transform-origin:0 30.90px;">order_created_month</div>
<div style="position:absolute;left:3453.10px;top:1822.30px;font-size:36.5px;line-height:36.5px;color:#2e3035;white-space:nowrap;letter-spacing:1.005px;transform:scaleY(1.04);transform-origin:0 30.90px;">order_created_quarter</div>
<div style="position:absolute;left:3453.10px;top:1896.30px;font-size:36.5px;line-height:36.5px;color:#2e3035;white-space:nowrap;letter-spacing:0.800px;transform:scaleY(1.04);transform-origin:0 30.90px;">order_created_week</div>
<div style="position:absolute;left:3453.10px;top:1970.30px;font-size:36.5px;line-height:36.5px;color:#2e3035;white-space:nowrap;letter-spacing:0.712px;transform:scaleY(1.04);transform-origin:0 30.90px;">order_created_year</div>
<div style="position:absolute;left:3453.10px;top:2044.30px;font-size:36.5px;line-height:36.5px;color:#2e3035;white-space:nowrap;letter-spacing:0.444px;transform:scaleY(1.04);transform-origin:0 30.90px;">order_gloss_amt_usd</div>
<svg width="4096" height="2064" viewBox="0 0 4096 2064">
<g fill="#4a9fd0"><rect x="3400" y="430.3" width="30.1" height="3.1"/><rect x="3400" y="430.3" width="2.8" height="9.6"/><rect x="3427.3" y="430.3" width="2.8" height="9.6"/><rect x="3413.4" y="430.3" width="3.5" height="30"/><rect x="3407" y="457.6" width="16.6" height="2.9"/></g>
<g stroke="#4a9fd0" stroke-width="3.2" fill="none"><path d="M3408.3,501.0 v33 M3418.3,501.0 v33 M3396.4,512.5 h33.4 M3396.4,522.5 h33.4"/></g>
<g fill="#4a9fd0"><rect x="3400" y="578.3" width="30.1" height="3.1"/><rect x="3400" y="578.3" width="2.8" height="9.6"/><rect x="3427.3" y="578.3" width="2.8" height="9.6"/><rect x="3413.4" y="578.3" width="3.5" height="30"/><rect x="3407" y="605.5999999999999" width="16.6" height="2.9"/></g>
<g stroke="#4a9fd0" stroke-width="3.2" fill="none"><path d="M3408.3,649.0 v33 M3418.3,649.0 v33 M3396.4,660.5 h33.4 M3396.4,670.5 h33.4"/></g>
<g fill="#4a9fd0"><rect x="3400" y="726.3" width="30.1" height="3.1"/><rect x="3400" y="726.3" width="2.8" height="9.6"/><rect x="3427.3" y="726.3" width="2.8" height="9.6"/><rect x="3413.4" y="726.3" width="3.5" height="30"/><rect x="3407" y="753.5999999999999" width="16.6" height="2.9"/></g>
<g fill="#4a9fd0"><rect x="3400" y="800.3" width="30.1" height="3.1"/><rect x="3400" y="800.3" width="2.8" height="9.6"/><rect x="3427.3" y="800.3" width="2.8" height="9.6"/><rect x="3413.4" y="800.3" width="3.5" height="30"/><rect x="3407" y="827.5999999999999" width="16.6" height="2.9"/></g>
<g fill="#4a9fd0"><rect x="3400" y="874.3" width="30.1" height="3.1"/><rect x="3400" y="874.3" width="2.8" height="9.6"/><rect x="3427.3" y="874.3" width="2.8" height="9.6"/><rect x="3413.4" y="874.3" width="3.5" height="30"/><rect x="3407" y="901.5999999999999" width="16.6" height="2.9"/></g>
<g stroke="#4a9fd0" stroke-width="3.2" fill="none"><path d="M3408.3,945.0 v33 M3418.3,945.0 v33 M3396.4,956.5 h33.4 M3396.4,966.5 h33.4"/></g>
<g stroke="#4a9fd0" stroke-width="3.2" fill="none"><rect x="3398.2" y="1026.8" width="30" height="23.8" rx="2"/><path d="M3398,1032.2 h30.4 M3404.8,1019.0 v7 M3421.7,1019.0 v7"/></g>
<g fill="#4a9fd0"><rect x="3400" y="1096.3" width="30.1" height="3.1"/><rect x="3400" y="1096.3" width="2.8" height="9.6"/><rect x="3427.3" y="1096.3" width="2.8" height="9.6"/><rect x="3413.4" y="1096.3" width="3.5" height="30"/><rect x="3407" y="1123.6" width="16.6" height="2.9"/></g>
<g fill="#4a9fd0"><rect x="3400" y="1170.3" width="30.1" height="3.1"/><rect x="3400" y="1170.3" width="2.8" height="9.6"/><rect x="3427.3" y="1170.3" width="2.8" height="9.6"/><rect x="3413.4" y="1170.3" width="3.5" height="30"/><rect x="3407" y="1197.6" width="16.6" height="2.9"/></g>
<g stroke="#3ec06f" stroke-width="3.2" fill="none"><path d="M3408.3,1378.0 v33 M3418.3,1378.0 v33 M3396.4,1389.5 h33.4 M3396.4,1399.5 h33.4"/></g>
<g stroke="#3ec06f" stroke-width="3.2" fill="none"><path d="M3408.3,1452.0 v33 M3418.3,1452.0 v33 M3396.4,1463.5 h33.4 M3396.4,1473.5 h33.4"/></g>
<g stroke="#3ec06f" stroke-width="3.2" fill="none"><path d="M3408.3,1526.0 v33 M3418.3,1526.0 v33 M3396.4,1537.5 h33.4 M3396.4,1547.5 h33.4"/></g>
<g stroke="#3ec06f" stroke-width="3.2" fill="none"><path d="M3408.3,1600.0 v33 M3418.3,1600.0 v33 M3396.4,1611.5 h33.4 M3396.4,1621.5 h33.4"/></g>
<g stroke="#3ec06f" stroke-width="3.2" fill="none"><path d="M3408.3,1674.0 v33 M3418.3,1674.0 v33 M3396.4,1685.5 h33.4 M3396.4,1695.5 h33.4"/></g>
<g stroke="#3ec06f" stroke-width="3.2" fill="none"><path d="M3408.3,1748.0 v33 M3418.3,1748.0 v33 M3396.4,1759.5 h33.4 M3396.4,1769.5 h33.4"/></g>
<g stroke="#3ec06f" stroke-width="3.2" fill="none"><path d="M3408.3,1822.0 v33 M3418.3,1822.0 v33 M3396.4,1833.5 h33.4 M3396.4,1843.5 h33.4"/></g>
<g stroke="#3ec06f" stroke-width="3.2" fill="none"><path d="M3408.3,1896.0 v33 M3418.3,1896.0 v33 M3396.4,1907.5 h33.4 M3396.4,1917.5 h33.4"/></g>
<g stroke="#3ec06f" stroke-width="3.2" fill="none"><path d="M3408.3,1970.0 v33 M3418.3,1970.0 v33 M3396.4,1981.5 h33.4 M3396.4,1991.5 h33.4"/></g>
<g stroke="#3ec06f" stroke-width="3.2" fill="none"><path d="M3408.3,2044.0 v33 M3418.3,2044.0 v33 M3396.4,2055.5 h33.4 M3396.4,2065.5 h33.4"/></g>
<g fill="#4a9fd0"><rect x="3366.1" y="440.3" width="19.9" height="3.4"/><rect x="3366.1" y="446.7" width="19.9" height="3.4"/></g>
<rect x="3396.6" y="383.1" width="33.4" height="3.4" rx="1.7" fill="#4a9fd0"/>
<path d="M4011,187.6 C4011.3,183.6 4005.3,182.4 4003.2,187.6 C4001,193 3999,200.5 3996.6,209.5 C3994.6,217 3993,222.3 3989.6,224.9 C3986.4,227.2 3982.4,225.8 3982.9,222.4" fill="none" stroke="#55575f" stroke-width="2.9" stroke-linecap="round"/>
<path d="M3990.2,197.4 H4007.6" stroke="#55575f" stroke-width="2.6"/>
<text x="4003.2" y="219.8" font-family='"Liberation Serif", serif' font-style="italic" font-size="29" fill="#62646c">x</text>
<circle cx="4028.7" cy="199.5" r="13.5" fill="#3eb55f"/>
<path d="M4022.1,199.5 h13.2 M4028.7,192.9 v13.2" stroke="#fff" stroke-width="3.5"/>
</svg>
</body></html>
